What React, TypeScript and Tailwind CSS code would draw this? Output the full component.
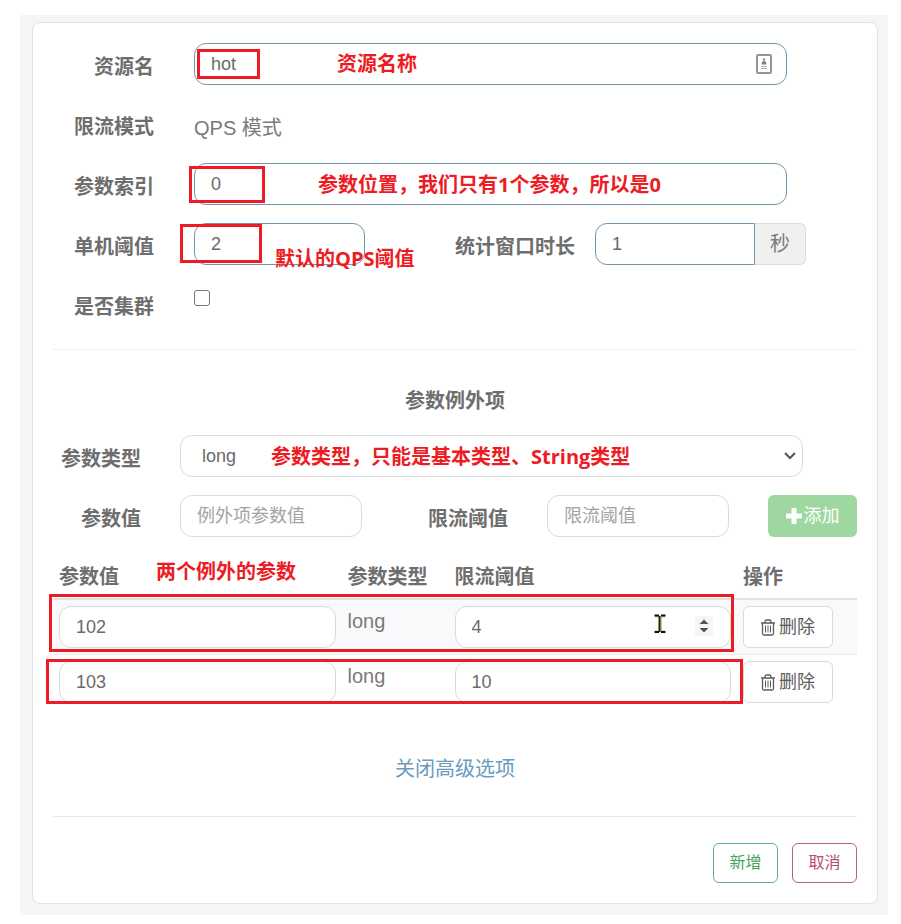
import type { ReactNode } from 'react'

const exceptions = [
  { id: 'a', value: '102', type: 'long', threshold: '4', hovered: true },
  { id: 'b', value: '103', type: 'long', threshold: '10', hovered: false },
]

const fieldBase = 'h-[42px] min-w-0 border bg-white px-4 text-lg text-[#6a6a6a] outline-none'
const blueField = `${fieldBase} rounded-xl border-[#7496a8]`
const grayField = `${fieldBase} rounded-xl border-[#d8dadc] placeholder:text-[#a3a3a3]`

export default function App() {
  return (
    <div className="bg-white pt-[15px] pr-[13px] pb-[9px] pl-5 font-['Liberation_Sans','Noto_Sans_CJK_SC',sans-serif] text-xl leading-[30px] text-[#7a7a7a]">
      <div className="bg-[#f5f5f5] pt-[7px] pr-[10px] pb-[11px] pl-3">
        <form className="rounded-lg border border-[#e2e2e2] bg-white p-5" onSubmit={(e) => e.preventDefault()}>
          <div className="flex flex-col gap-[18px]">
            <Row label="资源名" htmlFor="resource">
              <div className="relative mr-[70px] flex flex-1">
                <input id="resource" defaultValue="hot" className={`${blueField} w-full`} />
                <ContactIcon />
                <Mark className="top-[6px] left-[3px] h-[30px] w-[63px]" />
                <Note className="top-[6px] left-[143px]">资源名称</Note>
              </div>
            </Row>
            <Row label="限流模式">
              <p className="h-[42px] pt-[10px]">QPS 模式</p>
            </Row>
            <Row label="参数索引" htmlFor="param-index">
              <div className="relative mr-[70px] flex flex-1">
                <input id="param-index" defaultValue="0" className={`${blueField} w-full`} />
                <Mark className="top-[3px] -left-[5px] h-[37px] w-[76px]" />
                <Note className="top-[7px] left-[124px]">参数位置，我们只有1个参数，所以是0</Note>
              </div>
            </Row>
            <Row label="单机阈值" htmlFor="threshold">
              <div className="relative mr-[51px] flex flex-1">
                <input id="threshold" defaultValue="2" className={`${blueField} w-[171px]`} />
                <Label htmlFor="window" className="mr-5 flex-1">统计窗口时长</Label>
                <div className="flex w-[211px]">
                  <input
                    id="window"
                    defaultValue="1"
                    className={`${fieldBase} flex-1 rounded-l-xl border-[#7496a8]`}
                  />
                  <span className="flex h-[42px] w-[51px] items-center justify-center rounded-r-md border border-l-0 border-[#dcdcdc] bg-[#f0f0f1]">
                    秒
                  </span>
                </div>
                <Mark className="top-px -left-[14px] h-[39px] w-[82px]" />
                <Note className="top-[21px] left-[81px]">默认的QPS阈值</Note>
              </div>
            </Row>
            <Row label="是否集群" htmlFor="cluster">
              <div className="h-[42px] pt-[7px]">
                <input
                  id="cluster"
                  type="checkbox"
                  className="block size-4 appearance-none rounded-[3px] border border-[#767676] bg-white checked:bg-[#767676]"
                />
              </div>
            </Row>
          </div>

          <hr className="mt-6 border-[#f0f0f0]" />
          <h2 className="mt-9 text-center font-bold text-[#6e6e6e]">参数例外项</h2>

          <div className="mt-[19px] flex gap-[39px]">
            <Label htmlFor="param-type" className="w-[88px]">参数类型</Label>
            <div className="relative mr-[54px] flex flex-1">
              <select id="param-type" className={`${grayField} w-full appearance-none pl-[21px]`}>
                <option>long</option>
              </select>
              <svg
                viewBox="0 0 14 10"
                className="pointer-events-none absolute top-4 right-[6px] h-[10px] w-[14px]"
                fill="none"
                stroke="#555"
                strokeWidth="2"
                aria-hidden="true"
              >
                <path d="M2 2l5 5 5-5" />
              </svg>
              <Note className="top-[7px] left-[91px]">参数类型，只能是基本类型、String类型</Note>
            </div>
          </div>

          <div className="mt-[18px] flex gap-[39px]">
            <Label htmlFor="item-value" className="w-[88px]">参数值</Label>
            <input id="item-value" placeholder="例外项参数值" className={`${grayField} w-[182px]`} />
            <Label htmlFor="item-threshold" className="flex-1">限流阈值</Label>
            <input id="item-threshold" placeholder="限流阈值" className={`${grayField} w-[182px]`} />
            <button
              type="button"
              className="flex h-[42px] w-[89px] shrink-0 items-center justify-center gap-[2px] rounded-md bg-[#9ed79f] text-lg text-white"
            >
              <svg viewBox="0 0 16 16" className="size-4" fill="currentColor" aria-hidden="true">
                <path d="M5.500 0h5v5.500H16v5h-5.500V16h-5v-5.500H0v-5h5.500z" />
              </svg>
              添加
            </button>
          </div>

          <div className="relative mt-[19px]">
            <table className="w-full table-fixed border-separate border-spacing-0 text-left">
              <thead className="text-[#6e6e6e]">
                <tr>
                  <th className="border-b-2 border-[#dfe1e3] p-[6px]">参数值</th>
                  <th className="w-[107px] border-b-2 border-[#dfe1e3] p-[6px] whitespace-nowrap">参数类型</th>
                  <th className="border-b-2 border-[#dfe1e3] p-[6px]">限流阈值</th>
                  <th className="w-[120px] border-b-2 border-[#dfe1e3] p-[6px]">操作</th>
                </tr>
              </thead>
              <tbody>
                {exceptions.map((item) => (
                  <tr key={item.id} className="align-top odd:bg-[#f9f9fb] [&:first-child>td]:border-b">
                    <td className="border-[#ebebeb] p-[6px]">
                      <input
                        aria-label="参数值"
                        defaultValue={item.value}
                        className={`${grayField} block w-full`}
                      />
                    </td>
                    <td className="border-[#ebebeb] p-[6px]">{item.type}</td>
                    <td className="border-[#ebebeb] p-[6px]">
                      <div className="relative">
                        <input
                          aria-label="限流阈值"
                          defaultValue={item.threshold}
                          className={`${grayField} block w-full`}
                        />
                        {item.hovered && <Spinner />}
                        {item.hovered && <TextCursor />}
                      </div>
                    </td>
                    <td className="border-[#ebebeb] p-[6px]">
                      <button
                        type="button"
                        className="flex h-[42px] w-[90px] items-center justify-center gap-1 rounded-md border border-[#d8dadc] bg-white text-lg text-[#5c5c5c]"
                      >
                        <TrashIcon />
                        删除
                      </button>
                    </td>
                  </tr>
                ))}
              </tbody>
            </table>
            <Note className="top-px left-[103px]">两个例外的参数</Note>
            <Mark className="top-[38px] right-[123px] -left-1 h-[58px]" />
            <Mark className="top-[103px] right-[114px] -left-[7px] h-[45px]" />
          </div>

          <div className="mt-[45px] text-center">
            <a href="#advanced" className="text-[#6a9bbd]">关闭高级选项</a>
          </div>

          <hr className="mt-8 border-[#e8e8e8]" />
          <div className="mt-[26px] flex justify-end gap-[14px] text-base">
            <button type="submit" className="h-10 w-[65px] rounded-md border border-[#5fb077] text-[#44a35e]">
              新增
            </button>
            <button type="button" className="h-10 w-[65px] rounded-md border border-[#b0647e] text-[#b3506c]">
              取消
            </button>
          </div>
        </form>
      </div>
    </div>
  )
}

function Row({ label, htmlFor, children }: { label: string; htmlFor?: string; children: ReactNode }) {
  return (
    <div className="flex gap-10">
      <Label htmlFor={htmlFor} className="w-[101px]">{label}</Label>
      {children}
    </div>
  )
}

function Label({ htmlFor, className, children }: { htmlFor?: string; className: string; children: ReactNode }) {
  const classes = `shrink-0 pt-[9px] text-right font-bold text-[#6e6e6e] ${className}`
  if (!htmlFor) return <span className={classes}>{children}</span>
  return <label htmlFor={htmlFor} className={classes}>{children}</label>
}

function Note({ className, children }: { className: string; children: ReactNode }) {
  return (
    <span
      className={`pointer-events-none absolute z-10 font-['Open_Sans','Noto_Sans_CJK_SC',sans-serif] font-bold whitespace-nowrap text-[#ed1c24] ${className}`}
    >
      {children}
    </span>
  )
}

function Mark({ className }: { className: string }) {
  return <div className={`pointer-events-none absolute z-10 border-3 border-[#ed1c24] ${className}`} />
}

function ContactIcon() {
  return (
    <svg viewBox="0 0 16 20" className="absolute top-[11px] right-[15px] h-5 w-4" aria-hidden="true">
      <rect x="1" y="1" width="14" height="18" rx="1" fill="#fff" stroke="#959595" strokeWidth="2" />
      <circle cx="8" cy="5.500" r="1.300" fill="#909090" />
      <path d="M5.500 10.500q0-3.500 2.500-3.500t2.500 3.500z" fill="#808080" />
      <path d="M5 12.500h6M5 14.500h6" stroke="#a8a8a8" />
    </svg>
  )
}

function Spinner() {
  return (
    <svg viewBox="0 0 18 20" className="absolute top-[10px] right-[18px] h-5 w-[18px]" aria-hidden="true">
      <path d="M0 0h18v20H0z" fill="#f5f5f5" />
      <path d="M4.500 8L9 3.500 13.500 8zM4.500 12L9 16.500l4.500-4.500z" fill="#555" />
    </svg>
  )
}

function TextCursor() {
  return (
    <svg viewBox="0 0 12 20" className="absolute top-2 right-[65px] h-5 w-3" aria-hidden="true">
      <path d="M1 2.500h10M1 17.500h10M7 3v14" stroke="#c3d17c" strokeWidth="2" />
      <path d="M.5 1.500h4.500M7 1.500h4.500M.5 18h4.500M7 18h4.500" stroke="#111" strokeWidth="2" />
      <path d="M5.500 2v16" stroke="#222" strokeWidth="2" />
    </svg>
  )
}

function TrashIcon() {
  return (
    <svg viewBox="0 0 14 17" className="h-[17px] w-[14px]" fill="none" stroke="#5c5c5c" strokeWidth="1.3" aria-hidden="true">
      <path d="M0 4h14M4 4V2.500Q4 1 5.500 1h3Q10 1 10 2.500V4M1.500 4v10.500q0 1.500 1.500 1.500h8q1.500 0 1.500-1.500V4" />
      <path d="M4.500 6.500v7M7 6.500v7M9.500 6.500v7" strokeWidth="1" />
    </svg>
  )
}
